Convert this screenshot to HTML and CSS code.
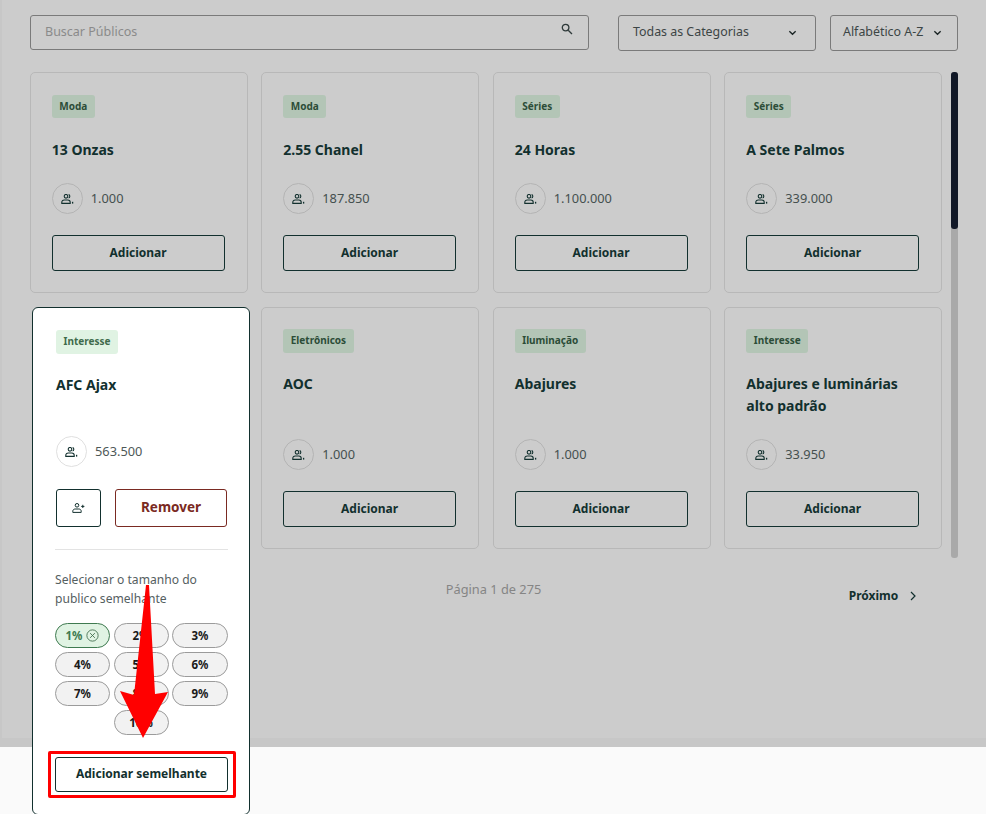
FILE: index.html
```html
<!DOCTYPE html>
<html lang="pt-BR">
<head>
<meta charset="utf-8">
<title>Públicos</title>
<link rel="stylesheet" href="styles.css">
</head>
<body>
<svg class="defs" width="0" height="0" aria-hidden="true">
  <symbol id="people" viewBox="0 0 13 10">
    <circle cx="5" cy="2.300" r="1.800" fill="none" stroke="currentColor" stroke-width="1.100"/>
    <path d="M7.600.6a1.800 1.800 0 0 1 0 3.400" fill="none" stroke="currentColor" stroke-width="1.100"/>
    <path d="M.8 9.400V8.200C.8 6.900 1.800 6 3.200 6h3.600c1.400 0 2.400.9 2.400 2.200v1.200z" fill="none" stroke="currentColor" stroke-width="1.100"/>
    <path d="M11.600 7.800v1.800" fill="none" stroke="currentColor" stroke-width="1.300"/>
  </symbol>
</svg>
<div class="stage">
  <div class="page">
    <div class="panel">
      <div class="filters">
        <div class="search"><span class="placeholder">Buscar Públicos</span>
          <svg class="search-icon" viewBox="0 0 12 12"><circle cx="4.600" cy="4.600" r="3.300"/><path d="M7.200 7.200l3.800 3.800"/></svg>
        </div>
        <div class="select select-cat"><span>Todas as Categorias</span><svg class="chev" viewBox="0 0 10 6"><path d="M1.500 1l3.500 3.500L8.500 1"/></svg></div>
        <div class="select select-sort"><span>Alfabético A-Z</span><svg class="chev" viewBox="0 0 10 6"><path d="M1.500 1l3.500 3.500L8.500 1"/></svg></div>
      </div>
      <div class="content">
        <div class="grid">
          <article class="card row-one"><span class="tag">Moda</span><h3>13 Onzas</h3><div class="reach"><span class="disc"><svg class="ic"><use href="#people"/></svg></span><span class="count">1.000</span></div><button class="btn">Adicionar</button></article>
          <article class="card row-one"><span class="tag">Moda</span><h3>2.55 Chanel</h3><div class="reach"><span class="disc"><svg class="ic"><use href="#people"/></svg></span><span class="count">187.850</span></div><button class="btn">Adicionar</button></article>
          <article class="card row-one"><span class="tag">Séries</span><h3>24 Horas</h3><div class="reach"><span class="disc"><svg class="ic"><use href="#people"/></svg></span><span class="count">1.100.000</span></div><button class="btn">Adicionar</button></article>
          <article class="card row-one"><span class="tag">Séries</span><h3>A Sete Palmos</h3><div class="reach"><span class="disc"><svg class="ic"><use href="#people"/></svg></span><span class="count">339.000</span></div><button class="btn">Adicionar</button></article>
          <div class="slot"></div>
          <article class="card"><span class="tag">Eletrônicos</span><h3>AOC</h3><div class="reach"><span class="disc"><svg class="ic"><use href="#people"/></svg></span><span class="count">1.000</span></div><button class="btn">Adicionar</button></article>
          <article class="card"><span class="tag">Iluminação</span><h3>Abajures</h3><div class="reach"><span class="disc"><svg class="ic"><use href="#people"/></svg></span><span class="count">1.000</span></div><button class="btn">Adicionar</button></article>
          <article class="card"><span class="tag">Interesse</span><h3>Abajures e luminárias alto padrão</h3><div class="reach"><span class="disc"><svg class="ic"><use href="#people"/></svg></span><span class="count">33.950</span></div><button class="btn">Adicionar</button></article>
        </div>
        <div class="scrollbar"><div class="thumb"></div></div>
      </div>
      <div class="pager">
        <span class="page-count">Página 1 de 275</span>
        <span class="next">Próximo <svg class="next-chev" viewBox="0 0 6 10"><path d="M1 1l4 4-4 4"/></svg></span>
      </div>
    </div>
  </div>
  <div class="footer-band"></div>

  <article class="popcard">
    <span class="tag tag-light">Interesse</span>
    <h3>AFC Ajax</h3>
    <div class="reach reach-pop"><span class="disc disc-pop"><svg class="ic"><use href="#people"/></svg></span><span class="count">563.500</span></div>
    <div class="actions">
      <button class="btn btn-icon" aria-label="Adicionar pessoa">
        <svg class="ic-add" viewBox="0 0 13 10"><circle cx="5" cy="2.300" r="1.800"/><path d="M.8 9.400V8.200C.8 6.900 1.800 6 3.200 6h3.600c1.400 0 2.400.9 2.400 2.200v1.200z"/><path d="M10.800 1.800v3.200M9.200 3.400h3.200"/></svg>
      </button>
      <button class="btn btn-remove">Remover</button>
    </div>
    <hr class="rule">
    <p class="hint">Selecionar o tamanho do publico semelhante</p>
    <div class="pills">
      <span class="pill pill-on">1% <svg class="x" viewBox="0 0 12 12"><circle cx="6" cy="6" r="5.200"/><path d="M3.800 3.800l4.400 4.400M8.200 3.800l-4.400 4.400"/></svg></span>
      <span class="pill">2%</span><span class="pill">3%</span>
      <span class="pill">4%</span><span class="pill">5%</span><span class="pill">6%</span>
      <span class="pill">7%</span><span class="pill">8%</span><span class="pill">9%</span>
      <span class="pill pill-last">10%</span>
    </div>
    <div class="cta-wrap"><button class="btn btn-cta">Adicionar semelhante</button></div>
  </article>

  <svg class="arrow" viewBox="0 0 48 153"><polygon points="26,0 29,0 35,109 48,107 23,153 0,106 14,110"/></svg>
</div>
</body>
</html>
```
FILE: styles.css
```css
* { box-sizing: border-box; }
html, body { margin: 0; padding: 0; height: 100%; overflow: hidden; }
body { font-family: "Noto Sans", "Liberation Sans", sans-serif; color: #12302e; background: #fafafa; }
.defs { position: absolute; }
.stage { position: relative; width: 986px; height: 814px; overflow: hidden; display: flex; flex-direction: column; }
.page { height: 747px; background: #c7c7c7; padding: 0 0 9px 2px; flex: none; }
.panel { height: 738px; background: #cccccc; padding: 15px 28px 0 27.750px; }
.footer-band { flex: 1; background: #fafafa; }

.filters { display: flex; height: 36px; padding-left: .25px; }
.search { width: 559px; height: 35px; border: 1px solid #7a7a7a; border-radius: 3px; display: flex; align-items: center; justify-content: space-between; padding: 0 15px 2px 14px; }
.placeholder { font-size: 12.500px; color: #8a8a8a; }
.search-icon { width: 12px; height: 12px; fill: none; stroke: #2f3a3a; stroke-width: 1.300; margin: -5px 0 0; }
.select { height: 36px; border: 1px solid #7a7a7a; border-radius: 3px; display: flex; align-items: center; justify-content: space-between; font-size: 12.400px; color: #3c4545; padding-bottom: 3px; }
.select-cat { width: 198px; margin-left: 29px; padding-left: 14px; padding-right: 18px; }
.select-sort { width: 128px; margin-left: 14px; padding-left: 12px; padding-right: 15px; }
.chev { width: 9px; height: 6px; fill: none; stroke: #1b2525; stroke-width: 1.500; margin-top: 3px; }

.content { display: flex; margin-top: 21px; justify-content: space-between; }
.grid { width: 912.250px; display: grid; grid-template-columns: repeat(4, 217.750px); gap: 14px 13.750px; align-content: start; }
.slot { height: 242px; }
.card { height: 242px; border: 1px solid #b8b8b8; border-radius: 5px; padding: 21px 22px 0 21px; display: flex; flex-direction: column; align-items: flex-start; }
.row-one { height: 221px; padding-top: 22px; }
.tag { height: 24px; padding: 0 7.500px 2px; border-radius: 3px; background: #b3c5b6; color: #2c4d38; font-size: 10px; font-weight: 700; display: inline-flex; align-items: center; }
.row-one .tag { height: 23px; }
h3 { margin: 0; font-size: 14px; line-height: 22px; font-weight: 700; color: #12302e; }
.card h3 { margin-top: 20px; flex: 1; }
.row-one h3 { margin-top: 21px; }
.reach { display: flex; align-items: center; gap: 8px; font-size: 12.800px; color: #45504f; }
.count { margin-top: -2px; }
.disc { width: 31px; height: 31px; border: 1px solid #b4b4b4; border-radius: 50%; display: flex; align-items: center; justify-content: center; color: #12302e; flex: none; }
.ic { width: 13px; height: 10px; }
.btn { font-family: inherit; font-weight: 700; font-size: 12px; color: #12302e; background: transparent; border: 1px solid #12302e; border-radius: 3px; padding: 0 0 1px; }
.card .btn { width: 100%; height: 36px; margin: 21px 0; }

.scrollbar { width: 7px; height: 486px; background: #a9a9a9; border-radius: 3px; flex: none; }
.thumb { height: 157px; background: #111827; border-radius: 3px; }

.pager { position: relative; height: 40px; margin-top: 23px; }
.page-count { position: absolute; left: 416px; top: -1px; font-size: 12.800px; color: #858585; }
.next { position: absolute; left: 819px; top: 6px; font-size: 12px; font-weight: 700; color: #12302e; display: flex; align-items: center; gap: 12px; }
.next-chev { width: 6px; height: 10px; fill: none; stroke: #12302e; stroke-width: 1.200; }

.popcard { position: absolute; left: 32px; top: 307px; width: 218px; height: 508px; background: #fff; border: 1px solid #12302e; border-radius: 6px; padding: 22px 21px 0 23px; display: flex; flex-direction: column; align-items: flex-start; z-index: 2; }
.tag-light { background: #e0f3e3; color: #3f6b4b; }
.popcard h3 { margin-top: 20px; }
.reach-pop { margin-top: 40px; color: #4e5857; }
.disc-pop { border-color: #e0e0e0; }
.actions { display: flex; gap: 14px; margin-top: 22px; width: 100%; }
.btn-icon { width: 45px; height: 38px; display: flex; align-items: center; justify-content: center; flex: none; padding: 0; }
.ic-add { width: 13px; height: 10px; fill: none; stroke: #12302e; stroke-width: 1; }
.btn-remove { width: 112px; height: 38px; border-color: #7a2a22; color: #7a2a22; font-size: 13.500px; padding-bottom: 2px; }
.rule { width: 173px; border: 0; border-top: 1px solid #e3e3e3; margin: 22px 0 0 -1px; }
.hint { margin: 20px 0 0 -1px; width: 170px; font-size: 12.100px; line-height: 19px; color: #55605f; }
.pills { display: grid; grid-template-columns: 55px 55px 56px; column-gap: 3.500px; row-gap: 4px; margin: 15px 0 0 -1px; }
.pill { height: 25px; border: 1px solid #9b9b9b; border-radius: 13px; background: #f2f2f2; font-size: 11.500px; font-weight: 700; display: flex; align-items: center; justify-content: center; color: #1a1a1a; padding-bottom: 1px; }
.pill-on { background: #e0f3e3; border-color: #3f7a50; color: #3f7a50; gap: 4px; }
.pill-last { grid-column: 2; }
.x { width: 13px; height: 13px; fill: none; stroke: #3f6b4b; stroke-width: .8; margin-top: 1px; }
.cta-wrap { margin: 16px 0 0 -8px; border: 3px solid #f00; border-radius: 2px; padding: 3px 5px 3px 4px; width: 188px; }
.btn-cta { display: block; width: 173px; height: 35px; padding-bottom: 3px; }

.arrow { position: absolute; left: 120px; top: 585px; width: 48px; height: 153px; z-index: 3; }
.arrow polygon { fill: #f00; }
```
